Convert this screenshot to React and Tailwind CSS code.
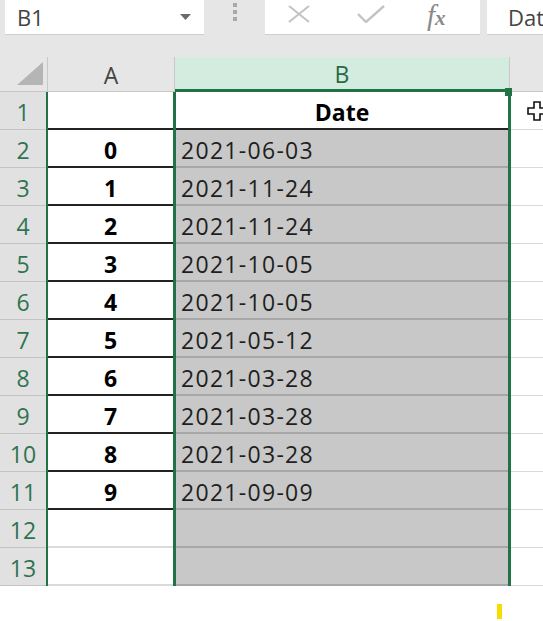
import React from 'react';

const font = { fontFamily: '"Open Sans", "Noto Sans", sans-serif' };

const data = [
  [null, 'Date'],
  ['0', '2021-06-03'],
  ['1', '2021-11-24'],
  ['2', '2021-11-24'],
  ['3', '2021-10-05'],
  ['4', '2021-10-05'],
  ['5', '2021-05-12'],
  ['6', '2021-03-28'],
  ['7', '2021-03-28'],
  ['8', '2021-03-28'],
  ['9', '2021-09-09'],
  [null, null],
  [null, null],
];

function Toolbar() {
  return (
    <div className="h-[57px] bg-[#e6e6e6] flex items-start">
      <div className="ml-[5px] w-[199px] shrink-0 h-[35px] bg-white border-b border-[#cfcfcf] flex items-center justify-between pl-[12px] pr-[13px]">
        <span className="text-[22px] text-[#444] leading-none">B1</span>
        <svg width="11" height="6" viewBox="0 0 11 6"><path d="M0 0h11L5.5 6z" fill="#6b6b6b" /></svg>
      </div>
      <div className="w-[61px] shrink-0 h-[35px] flex flex-col items-center pt-[3px] gap-[3px]">
        <div className="w-[4px] h-[4px] bg-[#a9a9a9]" />
        <div className="w-[4px] h-[4px] bg-[#a9a9a9]" />
        <div className="w-[4px] h-[4px] bg-[#a9a9a9]" />
      </div>
      <div className="w-[215px] shrink-0 h-[35px] bg-white border-b border-[#cfcfcf] flex items-center pl-[22px] pb-[6px]">
        <svg width="24" height="18" viewBox="0 0 24 18"><path d="M2 1l20 16M22 1L2 17" stroke="#c4c4c4" strokeWidth="2.2" fill="none" /></svg>
        <svg className="ml-[46px]" width="28" height="18" viewBox="0 0 28 18"><path d="M1 9l8 8L27 1" stroke="#c4c4c4" strokeWidth="2.4" fill="none" /></svg>
        <span className="ml-[42px] mt-[2px] text-[29px] leading-none text-[#8a8a8a] italic" style={{ fontFamily: '"Liberation Serif", serif' }}>
          f<span className="text-[21px] font-bold">x</span>
        </span>
      </div>
      <div className="ml-[7px] flex-1 min-w-0 h-[35px] bg-white border-b border-[#cfcfcf] flex items-center pl-[21px]">
        <span className="text-[22px] text-[#444] leading-none">Dat</span>
      </div>
    </div>
  );
}

function HeaderRow() {
  return (
    <div className="flex h-[35px] text-[23px] leading-none">
      <div className="w-[48px] shrink-0 bg-[#e6e6e6] border-r border-b border-[#c8c8c8] flex items-end justify-end pr-[4px] pb-[6px]">
        <svg width="26" height="23" viewBox="0 0 26 23"><path d="M26 0v23H0z" fill="#b5b5b5" /></svg>
      </div>
      <div className="w-[127px] shrink-0 bg-[#e6e6e6] border-r border-b border-[#c8c8c8] flex items-center justify-center pt-[2px] text-[#444]">A</div>
      <div className="relative w-[335px] shrink-0 bg-[#d3ecdf] border-r border-[#c8c8c8] border-b-[3px] border-b-[#217346] flex items-center justify-center pt-[2px] text-[#2a6a44]">
        B
        <div className="absolute right-[-3px] bottom-[-7px] w-[7px] h-[8px] bg-[#217346] z-10" />
      </div>
      <div className="flex-1 min-w-0 bg-[#e6e6e6] border-b border-[#c8c8c8]" />
    </div>
  );
}

function Body() {
  return (
    <div className="flex text-[23px] leading-none">
      <div className="w-[48px] shrink-0 bg-[#e1e1e1] border-r-2 border-[#217346] flex flex-col">
        {data.map((_, i) => (
          <div key={i} className="h-[38px] border-b border-[#c3c3c3] flex items-center justify-center pt-[4px] text-[#2f7351]">
            {i + 1}
          </div>
        ))}
      </div>
      <div className="w-[125px] shrink-0 bg-white flex flex-col">
        {data.map((r, i) => (
          <div key={i} className={`h-[38px] border-b-2 flex items-center justify-center pt-[4px] font-bold text-black ${i <= 10 ? 'border-[#222]' : 'border-[#dadada]'}`}>
            {r[0]}
          </div>
        ))}
      </div>
      <div className="w-[338px] shrink-0 border-l-[3px] border-r-[3px] border-[#217346] flex flex-col">
        {data.map((r, i) =>
          i === 0 ? (
            <div key={i} className="h-[38px] bg-white border-b-2 border-[#222] flex items-center justify-center pt-[4px] font-bold text-black">
              {r[1]}
            </div>
          ) : (
            <div key={i} className="h-[38px] bg-[#c8c8c8] border-b-2 border-[#a7a7a7] flex items-center pl-[5px] pt-[4px] text-[#1f1f1f] tracking-[1.3px]">
              {r[1]}
            </div>
          )
        )}
      </div>
      <div className="flex-1 min-w-0 bg-white flex flex-col">
        {data.map((_, i) => (
          <div key={i} className="h-[38px] border-b border-[#dadada] flex items-center pl-[16px]">
            {i === 0 && (
              <svg className="shrink-0" width="20" height="20" viewBox="0 0 20 20">
                <path d="M7 1h6v6h6v6h-6v6H7v-6H1V7h6z" fill="#fff" stroke="#111" strokeWidth="1.6" />
              </svg>
            )}
          </div>
        ))}
      </div>
    </div>
  );
}

export default function App() {
  return (
    <div className="w-[543px] h-[621px] bg-white overflow-hidden" style={font}>
      <Toolbar />
      <HeaderRow />
      <Body />
      <div className="flex justify-end pr-[41px] pt-[18px]">
        <div className="w-[5px] h-[15px] bg-[#f7dc00]" />
      </div>
    </div>
  );
}
